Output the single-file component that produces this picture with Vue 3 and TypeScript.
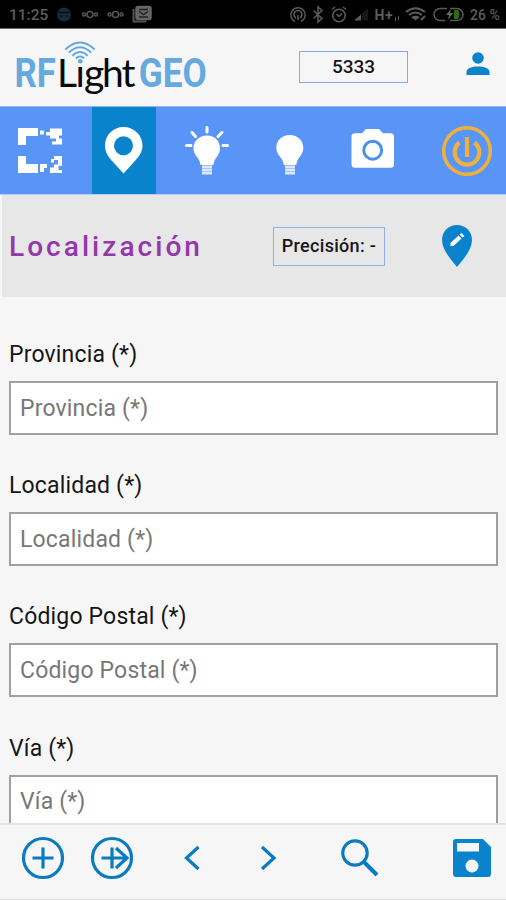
<script setup lang="ts">
import { ref } from 'vue'

interface Field {
  id: string
  label: string
}

const fields: Field[] = [
  { id: 'provincia', label: 'Provincia (*)' },
  { id: 'localidad', label: 'Localidad (*)' },
  { id: 'codigo-postal', label: 'Código Postal (*)' },
  { id: 'via', label: 'Vía (*)' },
]
const values = ref<Record<string, string>>({})
</script>

<template>
  <div class="screen">
    <div class="status">
      <span class="clock">11:25</span>
      <svg class="status-left" width="100" height="28" viewBox="55 0 100 28" fill="none" stroke="#555" stroke-width="1.5">
        <circle cx="64" cy="14.500" r="7" fill="#182b3d" stroke="none" />
        <path d="M58 12.500h12M60 16h2M66 16h2" stroke="#070d13" />
        <circle cx="90" cy="14.500" r="3" /><circle cx="84" cy="14.500" r="1.500" /><circle cx="96" cy="14.500" r="1.500" />
        <circle cx="115.500" cy="14.500" r="3" /><circle cx="109.500" cy="14.500" r="1.500" /><circle cx="121.500" cy="14.500" r="1.500" />
        <path d="M133.500 9v12.500h13" stroke-width="2" />
        <rect x="136" y="6.500" width="15" height="13" rx="2" fill="#666" stroke="#666" />
        <path d="M139 9.500h9M139 11.500l4.500 3 4.500-3M139 17h9" stroke="#222" />
      </svg>
      <svg class="status-right" width="185" height="28" viewBox="285 0 185 28" fill="none" stroke="#5c5c5c" stroke-width="1.500">
        <path d="M295 21.500a7.200 7.200 0 1 1 6 0M296 18a4 4 0 1 1 4 0M298 15v5" />
        <path d="M313.500 10.500l8.500 8-4 3.500V7l4 3.500-8.500 8" />
        <circle cx="339" cy="15.500" r="6.200" /><path d="M332 9.500l3-2.500M346 9.500L343 7M336.500 14l2.500 2.500 3-3" />
        <path d="M354 20.500l7-6v6z" fill="#5c5c5c" stroke="none" /><path d="M362 20.500v-7l6-5v12z" fill="#171717" stroke="none" />
        <text x="374.500" y="20" class="network">H+</text>
        <path d="M395.500 17v4M398.500 16v4" stroke-width="1" />
        <path d="M406 12q9.500-7.500 19 0M409 15q6.500-5 13 0M412 18q3.500-2.500 7 0M421 20l4-4" stroke-width="2" />
        <path d="M415.500 19.500l-2-2h4z" fill="#5c5c5c" />
        <path d="M447 8.500h-7a6 6 0 0 0 0 12h5M450 8.500h7a6 6 0 0 1 0 12h-7" />
        <path d="M454 10h4q3 4 0 9h-4z" fill="#2d6b0c" stroke="none" />
        <path d="M451 9l-5 6h3l-1 5 5-7h-3z" fill="#666" stroke="none" />
      </svg>
      <span class="battery">26 %</span>
    </div>

    <header class="header">
      <svg class="logo" width="200" height="64" viewBox="12 38 200 64">
        <text class="brand blue" transform="translate(14.500 87) scale(.87 1)">RF</text>
        <text class="brand dark" x="57 75.500 84 102 121.500" y="87">Light</text>
        <text class="brand blue" transform="translate(138.700 87) scale(.88 1)">GEO</text>
        <circle cx="80" cy="60" r="4.500" fill="#f6f6f6" />
        <circle cx="80.300" cy="61.200" r="2.300" fill="#65a9df" />
        <g fill="none" stroke="#65a9df" stroke-width="1.900">
          <path d="M65.300 49.500Q80 35.500 94.700 49.500" /><path d="M68.800 52.700Q80 42 91.200 52.700" /><path d="M72.300 55.700Q80 48.500 87.700 55.700" /><path d="M75.800 58.300Q80 54.500 84.200 58.300" />
        </g>
      </svg>
      <div class="code">5333</div>
      <svg class="user" width="24" height="24" viewBox="0 0 24 24" fill="#0983cb">
        <circle cx="12" cy="6" r="5.800" /><path d="M.5 23v-3C.5 12.800 23.500 12.800 23.500 20v3z" />
      </svg>
    </header>

    <nav class="tabs">
      <button class="tab" aria-label="Escanear">
        <svg width="46" height="46" viewBox="17 127 46 46" fill="#fff">
          <path d="M18 128h20v8H26v9h-8zM40 130.500h4v4h-4zM46 132h4v-3.500h12v7h-3v3h3v6H52v-3h4v-3h-6v-3h-4z" />
          <path d="M18 156h8v8h12v9H18zM40 164h7v4h-3v4h-4z" />
          <path d="M54 156h8v10h-3.500v4H62v3H50v-5.500h4v-3h4V160h-4v2.500h-3V159h3z" />
        </svg>
      </button>
      <button class="tab active" aria-label="Localización">
        <svg width="40" height="48" viewBox="105 126 40 48" fill="#fff">
          <path fill-rule="evenodd" d="M124.500 127C114 127 106 135.200 106 145.500c0 7 3.500 11.500 8 16.500l10.500 11.500L135 162c4.500-5 8.500-9.500 8.500-16.500C143.500 135.200 135 127 124.500 127zm0 9.200a9.500 9.500 0 1 1 0 19 9.500 9.500 0 0 1 0-19z" />
        </svg>
      </button>
      <button class="tab" aria-label="Encendida">
        <svg width="46" height="52" viewBox="184 125 46 52" fill="#fff">
          <path d="M207 135.500c-8 0-13.500 5.500-13.500 13 0 7.500 6.500 9 7 16.500h13c.5-7.500 6.500-9 6.500-16.500 0-7.500-5-13-13-13z" />
          <path d="M202 165.500h10v9h-10z" fill="#dce8fe" /><path d="M202 168.500h10M202 171.500h10" stroke="#a8c7fb" />
          <path d="M207 127.500v4.500M192 132.500l3.500 4M222 132.500l-4 4M186.500 145.500h4.500M223 145.500h4.500" stroke="#fff" stroke-width="3" stroke-linecap="round" />
        </svg>
      </button>
      <button class="tab" aria-label="Apagada">
        <svg width="30" height="52" viewBox="275 125 30 52" fill="#fff">
          <path d="M289.800 135c-8 0-13.500 5.500-13.500 13 0 7.500 7 9.500 7.500 17h12.500c.5-7.500 7-9.500 7-17 0-7.500-5.500-13-13.500-13z" />
          <path d="M285 165.500h10v9h-10z" fill="#dce8fe" /><path d="M285 168.500h10M285 171.500h10" stroke="#a8c7fb" />
        </svg>
      </button>
      <button class="tab" aria-label="Cámara">
        <svg width="46" height="42" viewBox="350 128 46 42" fill="#fff">
          <path d="M355 133.300h7l4-4.300h13l4 4.300h7.500q3.500 0 3.500 3.500v27.500q0 3.500-3.500 3.500H355q-3.500 0-3.500-3.500v-27.500q0-3.500 3.500-3.500z" />
          <circle cx="372.700" cy="150.200" r="9" fill="none" stroke="#4b90ed" stroke-width="3" />
        </svg>
      </button>
      <button class="tab" aria-label="Salir">
        <svg width="52" height="52" viewBox="0 0 52 52" fill="none" stroke="#efb13b" stroke-width="3.500">
          <circle cx="26" cy="26" r="23.300" /><path d="M18.500 17.500a12.300 12.300 0 1 0 15 0" stroke-width="4.200" /><path d="M26 12v20" stroke-width="4.200" />
        </svg>
      </button>
    </nav>

    <section class="heading">
      <h1>Localización</h1>
      <div class="precision">Precisión: -</div>
      <svg class="edit-pin" width="32" height="44" viewBox="0 0 32 44">
        <path d="M16 1C7.500 1 1 7.500 1 16c0 9 7.500 18 15 27 7.500-9 15-18 15-27C31 7.500 24.500 1 16 1z" fill="#0983cb" />
        <path d="M9.500 19l8-7.500 3 3-8 7.500h-3zM18.500 10.500l2-1.500 3 3-2 1.500z" fill="#fff" />
      </svg>
    </section>

    <main class="form">
      <div v-for="field in fields" :key="field.id" class="field">
        <label :for="field.id">{{ field.label }}</label>
        <input :id="field.id" v-model="values[field.id]" :placeholder="field.label" type="text" />
      </div>
    </main>

    <footer class="toolbar">
      <svg width="44" height="44" viewBox="0 0 44 44"><circle cx="22" cy="22" r="19.500" /><path d="M22 11.500v21M11.500 22h21" /></svg>
      <svg width="44" height="44" viewBox="0 0 44 44"><circle cx="22" cy="22" r="19.500" /><path d="M22 11.500v21M11.500 22h25M26 12l11 10-11 10" /></svg>
      <svg width="20" height="28" viewBox="0 0 20 28"><path d="M16.500 3L4.500 14l12 11" /></svg>
      <svg width="20" height="28" viewBox="0 0 20 28"><path d="M3 3l12 11L3 25" /></svg>
      <svg width="40" height="40" viewBox="0 0 40 40"><circle cx="15" cy="15" r="12.200" /><path d="M23.500 23.500l13.500 13.500" stroke-width="4" /></svg>
      <svg width="40" height="40" viewBox="0 0 40 40">
        <path d="M4 1h27l8 8v27q0 3-3 3H4q-3 0-3-3V4q0-3 3-3z" fill="#0983cb" stroke="none" />
        <path d="M5 5h22v8.500H5z" fill="#f6f6f6" stroke="none" /><circle cx="20" cy="28" r="6.500" fill="#f6f6f6" stroke="none" />
      </svg>
    </footer>
  </div>
</template>

<style>
body { margin: 0; }
</style>

<style scoped>
* { box-sizing: border-box; }
.screen {
  width: 506px;
  height: 900px;
  display: flex;
  flex-direction: column;
  overflow: hidden;
  background: #f6f6f6;
  font-family: Roboto, "Liberation Sans", sans-serif;
  color: #161616;
}
svg { display: block; flex: none; }
.status {
  height: 29px;
  flex: none;
  display: flex;
  align-items: flex-start;
  background: #000;
  border-bottom: 1px solid #69646a;
  color: #5c5c5c;
  font-size: 15.500px;
  line-height: 30px;
}
.clock { width: 46px; margin-left: 9px; font-weight: 500; }
.status-right { margin-left: 130px; }
.network { fill: #5c5c5c; stroke: none; font-size: 14px; font-weight: 700; letter-spacing: .5px; }
.battery { font-size: 14px; font-weight: 500; white-space: nowrap; }
.header {
  height: 77px;
  flex: none;
  display: flex;
  align-items: flex-start;
  padding: 9px 0 0 12px;
}
.brand { font-size: 40px; }
.blue { fill: #65a9df; font-weight: 700; }
.dark { fill: #080808; font-family: Lato, sans-serif; font-size: 39px; }
.code {
  width: 109px;
  height: 32px;
  margin: 13px 0 0 87px;
  border: 1.500px solid #80a9f3;
  text-align: center;
  font-size: 19px;
  font-weight: 500;
  line-height: 30px;
}
.user { margin: 14px 0 0 58px; }
.tabs {
  height: 89px;
  flex: none;
  display: grid;
  grid-template-columns: 92px 64px 102px 64px 100px 84px;
  background: #5995f7;
  border-top: 1px solid #91b6f8;
  border-bottom: 1px solid #b5ccf8;
}
.tab {
  display: flex;
  align-items: center;
  justify-content: center;
  padding: 0;
  border: 0;
  background: none;
}
.tab:first-child { padding: 0 12px 2px 0; }
.tab:last-child { padding-left: 6px; }
.tab:nth-child(2) { padding-bottom: 2px; }
.tab:nth-child(5) { padding: 0 0 3px 2px; }
.active { background: #0983cb; }
.heading {
  height: 102px;
  flex: none;
  margin-left: 2px;
  display: flex;
  align-items: center;
  background: #e7e7e7;
}
h1 {
  width: 271px;
  margin: 0;
  padding-left: 7px;
  color: #9536ac;
  font-size: 28px;
  font-weight: 500;
  letter-spacing: 3.050px;
}
.precision {
  width: 112px;
  height: 39px;
  border: 1.500px solid #8fb0f0;
  text-align: center;
  font-size: 18px;
  font-weight: 500;
  letter-spacing: .3px;
  line-height: 36px;
  white-space: nowrap;
}
.edit-pin { margin-left: 56px; }
.form {
  flex: 1;
  min-height: 0;
  overflow: hidden;
  padding: 42px 8px 0 9px;
}
.field { height: 131.200px; }
label { display: block; height: 42px; font-size: 23px; line-height: 32px; letter-spacing: .17px; }
input {
  display: block;
  width: 489px;
  height: 54px;
  padding: 0 9px;
  border: 2px solid #a0a0a0;
  border-radius: 0;
  background: #fff;
  font: 23px Roboto, sans-serif;
  letter-spacing: .17px;
  outline: none;
}
input::placeholder { color: #777; opacity: 1; }
.toolbar {
  height: 77px;
  flex: none;
  display: grid;
  grid-template-columns: 69px 72px 75px 68px 113px 40px;
  align-items: center;
  padding: 0 0 8px 20.500px;
  border-top: 2px solid #e2e2e2;
  border-bottom: 1px solid #dcdcdc;
}
.toolbar svg { fill: none; stroke: #0b7bc1; stroke-width: 3.200; }
.toolbar svg:nth-child(3) { margin-left: 20px; }
.toolbar svg:nth-child(4) { margin-left: 22px; }
.toolbar svg:nth-child(5) { margin-left: 35px; }
.toolbar svg:nth-child(6) { margin-left: 34px; }
</style>
